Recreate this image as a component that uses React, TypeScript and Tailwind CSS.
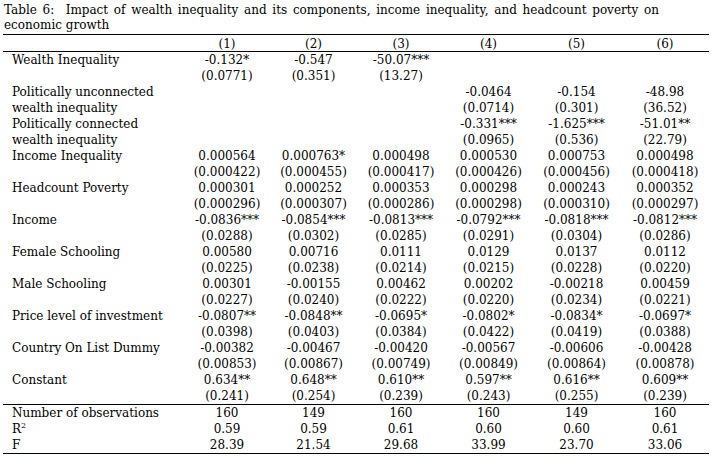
const rows: string[][] = [
  ['Wealth Inequality', '-0.132*', '-0.547', '-50.07***', '', '', ''],
  ['', '(0.0771)', '(0.351)', '(13.27)', '', '', ''],
  ['Politically unconnected', '', '', '', '-0.0464', '-0.154', '-48.98'],
  ['wealth inequality', '', '', '', '(0.0714)', '(0.301)', '(36.52)'],
  ['Politically connected', '', '', '', '-0.331***', '-1.625***', '-51.01**'],
  ['wealth inequality', '', '', '', '(0.0965)', '(0.536)', '(22.79)'],
  ['Income Inequality', '0.000564', '0.000763*', '0.000498', '0.000530', '0.000753', '0.000498'],
  ['', '(0.000422)', '(0.000455)', '(0.000417)', '(0.000426)', '(0.000456)', '(0.000418)'],
  ['Headcount Poverty', '0.000301', '0.000252', '0.000353', '0.000298', '0.000243', '0.000352'],
  ['', '(0.000296)', '(0.000307)', '(0.000286)', '(0.000298)', '(0.000310)', '(0.000297)'],
  ['Income', '-0.0836***', '-0.0854***', '-0.0813***', '-0.0792***', '-0.0818***', '-0.0812***'],
  ['', '(0.0288)', '(0.0302)', '(0.0285)', '(0.0291)', '(0.0304)', '(0.0286)'],
  ['Female Schooling', '0.00580', '0.00716', '0.0111', '0.0129', '0.0137', '0.0112'],
  ['', '(0.0225)', '(0.0238)', '(0.0214)', '(0.0215)', '(0.0228)', '(0.0220)'],
  ['Male Schooling', '0.00301', '-0.00155', '0.00462', '0.00202', '-0.00218', '0.00459'],
  ['', '(0.0227)', '(0.0240)', '(0.0222)', '(0.0220)', '(0.0234)', '(0.0221)'],
  ['Price level of investment', '-0.0807**', '-0.0848**', '-0.0695*', '-0.0802*', '-0.0834*', '-0.0697*'],
  ['', '(0.0398)', '(0.0403)', '(0.0384)', '(0.0422)', '(0.0419)', '(0.0388)'],
  ['Country On List Dummy', '-0.00382', '-0.00467', '-0.00420', '-0.00567', '-0.00606', '-0.00428'],
  ['', '(0.00853)', '(0.00867)', '(0.00749)', '(0.00849)', '(0.00864)', '(0.00878)'],
  ['Constant', '0.634**', '0.648**', '0.610**', '0.597**', '0.616**', '0.609**'],
  ['', '(0.241)', '(0.254)', '(0.239)', '(0.243)', '(0.255)', '(0.239)'],
]

const stats: string[][] = [
  ['Number of observations', '160', '149', '160', '160', '149', '160'],
  ['R2', '0.59', '0.59', '0.61', '0.60', '0.60', '0.61'],
  ['F', '28.39', '21.54', '29.68', '33.99', '23.70', '33.06'],
]

const grid = 'grid grid-cols-[181px_86px_87px_88px_87px_89px_88px]'

function Row({ cells }: { cells: string[] }) {
  return (
    <div className={`${grid} h-4 leading-4`}>
      <div className="pl-[9px] whitespace-nowrap">
        {cells[0] === 'R2' ? (
          <span>
            R<sup className="text-[8px] relative -top-[5px]">2</sup>
          </span>
        ) : (
          cells[0]
        )}
      </div>
      {cells.slice(1).map((c, i) => (
        <div key={i} className="text-center whitespace-nowrap">
          {c}
        </div>
      ))}
    </div>
  )
}

export default function App() {
  return (
    <div className="w-[713px] h-[458px] bg-white text-black font-['DejaVu_Serif',serif] text-[12px] overflow-hidden">
      {/* Caption */}
      <div className="pl-1 pt-[3px] leading-[15px]">
        <div className="w-[655px] text-justify [text-align-last:justify] whitespace-nowrap">
          Table 6:&nbsp; Impact of wealth inequality and its components, income inequality, and headcount poverty on
        </div>
        <div>economic growth</div>
      </div>

      {/* Table */}
      <div className="ml-[3px] w-[706px] mt-[1px]">
        <div className={`${grid} h-[18px] leading-[18px] border-t border-b border-black`}>
          <div />
          {['(1)', '(2)', '(3)', '(4)', '(5)', '(6)'].map((h) => (
            <div key={h} className="text-center">
              {h}
            </div>
          ))}
        </div>
        {rows.map((r, i) => (
          <Row key={i} cells={r} />
        ))}
        <div className="border-t border-black border-b-[1.5px]">
          {stats.map((r, i) => (
            <Row key={i} cells={r} />
          ))}
        </div>
      </div>
    </div>
  )
}
